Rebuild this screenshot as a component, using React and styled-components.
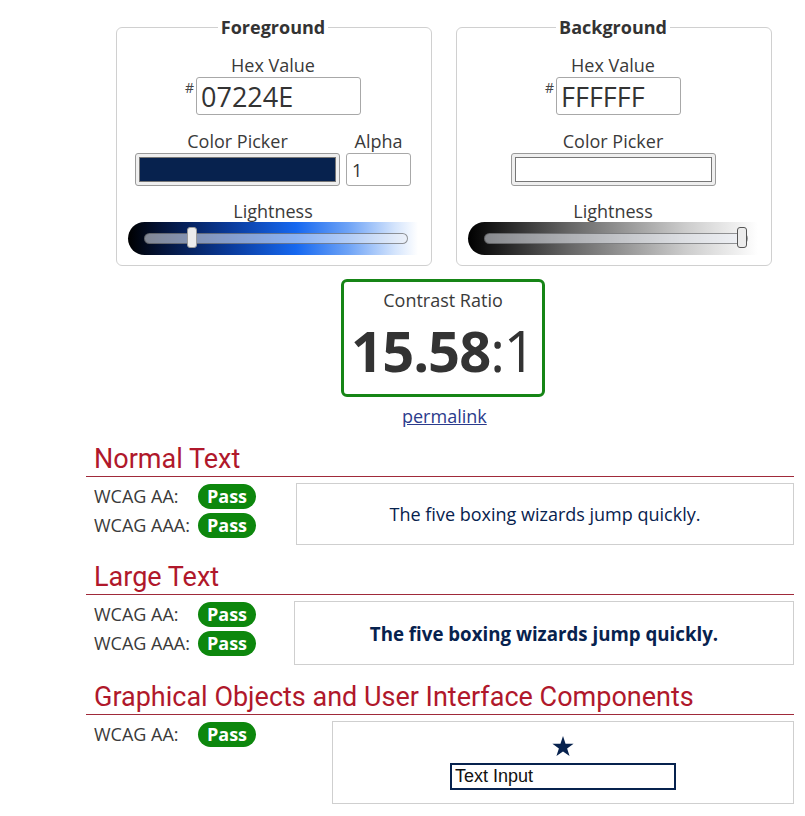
import React from 'react';
import styled, { createGlobalStyle } from 'styled-components';

const GlobalStyle = createGlobalStyle`
  body {
    margin: 0;
    background: #fff;
    font-family: "Open Sans", "Liberation Sans", sans-serif;
    color: #333;
  }
`;

const colors = [
  {
    title: 'Foreground',
    hex: '07224E',
    hexWidth: 165,
    swatch: '#07224E',
    alpha: '1',
    lightness: 16.7,
    gradient:
      'linear-gradient(to right, #000 0%, #04143a 12%, #0a3a9a 35%, #1668f0 58%, #6ea3f6 76%, #d4e4fc 92%, rgba(255,255,255,0) 100%)',
    thumbBorder: '#9a9a9a',
  },
  {
    title: 'Background',
    hex: 'FFFFFF',
    hexWidth: 125,
    swatch: '#FFFFFF',
    lightness: 100,
    gradient:
      'linear-gradient(to right, #000 0%, #222 12%, #666 35%, #999 55%, #ccc 75%, #eee 92%, rgba(255,255,255,0) 100%)',
    thumbBorder: '#555',
  },
];

const results = [
  {
    title: 'Normal Text',
    checks: ['WCAG AA:', 'WCAG AAA:'],
    indent: 40,
    height: 62,
    sample: 'normal',
  },
  {
    title: 'Large Text',
    checks: ['WCAG AA:', 'WCAG AAA:'],
    indent: 38,
    height: 64,
    sample: 'large',
  },
  {
    title: 'Graphical Objects and User Interface Components',
    checks: ['WCAG AA:'],
    indent: 76,
    height: 83,
    sample: 'ui',
  },
];

function ColorPanel({ c }) {
  return (
    <ColorSet>
      <Legend>{c.title}</Legend>
      <FieldLabel>Hex Value</FieldLabel>
      <HexRow>
        <Hash>#</Hash>
        <HexInput $w={c.hexWidth} value={c.hex} readOnly />
      </HexRow>
      <PickerRow>
        <Column>
          <FieldLabel>Color Picker</FieldLabel>
          <Swatch>
            <SwatchFill $color={c.swatch} />
          </Swatch>
        </Column>
        {c.alpha && (
          <Column>
            <FieldLabel>Alpha</FieldLabel>
            <AlphaInput value={c.alpha} readOnly />
          </Column>
        )}
      </PickerRow>
      <FieldLabel $top={14}>Lightness</FieldLabel>
      <Slider $gradient={c.gradient}>
        <Track>
          <Thumb $border={c.thumbBorder} style={{ left: `calc((100% - 10px) * ${c.lightness / 100})` }} />
        </Track>
      </Slider>
    </ColorSet>
  );
}

function Sample({ kind }) {
  if (kind === 'ui') {
    return (
      <UiSample>
        <svg width="22" height="21" viewBox="0 0 24 23">
          <polygon
            points="12,0 14.8,8.4 23.6,8.4 16.5,13.6 19.2,22 12,16.9 4.8,22 7.5,13.6 0.4,8.4 9.2,8.4"
            fill="#07224E"
          />
        </svg>
        <UiInput value="Text Input" readOnly />
      </UiSample>
    );
  }
  return <SampleText $large={kind === 'large'}>The five boxing wizards jump quickly.</SampleText>;
}

export default function App() {
  return (
    <Page>
      <GlobalStyle />
      <Pickers>
        {colors.map((c) => (
          <ColorPanel key={c.title} c={c} />
        ))}
      </Pickers>
      <RatioBox>
        <RatioLabel>Contrast Ratio</RatioLabel>
        <RatioValue>
          <strong>15.58</strong>:1
        </RatioValue>
      </RatioBox>
      <Permalink href="#">permalink</Permalink>
      <Results>
        {results.map((r) => (
          <section key={r.title}>
            <SectionTitle>{r.title}</SectionTitle>
            <ResultRow>
              <Checks>
                {r.checks.map((label) => (
                  <Check key={label}>
                    <CheckLabel>{label}</CheckLabel>
                    <Badge>Pass</Badge>
                  </Check>
                ))}
              </Checks>
              <SampleBox $indent={r.indent} $h={r.height}>
                <Sample kind={r.sample} />
              </SampleBox>
            </ResultRow>
          </section>
        ))}
      </Results>
    </Page>
  );
}

const Page = styled.div`
  width: 805px;
  padding-top: 16px;
  padding-bottom: 10px;
`;

const Pickers = styled.div`
  display: flex;
  gap: 24px;
  padding-left: 116px;
`;

const ColorSet = styled.fieldset`
  box-sizing: border-box;
  width: 316px;
  margin: 0;
  padding: 0 13px 10px 11px;
  border: 1px solid #d0d0d0;
  border-radius: 6px;
  display: flex;
  flex-direction: column;
  align-items: center;
`;

const Legend = styled.legend`
  margin: 0 auto;
  padding: 0 3px;
  font-size: 18px;
  font-weight: 700;
  line-height: 23px;
  color: #333;
`;

const FieldLabel = styled.div`
  margin-top: ${(p) => (p.$top !== undefined ? p.$top : 15)}px;
  font-size: 18px;
  line-height: 22px;
  color: #3a3a3a;
  text-align: center;
`;

const HexRow = styled.div`
  display: flex;
  align-items: flex-start;
  margin-top: 1px;
`;

const Hash = styled.span`
  font-size: 14px;
  line-height: 14px;
  margin-top: 4px;
  margin-right: 2px;
  color: #444;
`;

const HexInput = styled.input`
  box-sizing: border-box;
  width: ${(p) => p.$w}px;
  height: 38px;
  margin: 0;
  padding: 0 4px;
  border: 1px solid #a8a8a8;
  border-radius: 3px;
  font-family: "Open Sans", sans-serif;
  font-size: 27px;
  color: #333;
  outline: none;
`;

const PickerRow = styled.div`
  display: flex;
  gap: 6px;
`;

const Column = styled.div`
  display: flex;
  flex-direction: column;
  align-items: center;

  & > ${FieldLabel} {
    margin-top: 15px;
    margin-bottom: 1px;
  }
`;

const Swatch = styled.div`
  box-sizing: border-box;
  width: 205px;
  height: 33px;
  padding: 3px;
  border: 1px solid #9a9a9a;
  border-radius: 3px;
  background: #efefef;
`;

const SwatchFill = styled.div`
  height: 100%;
  box-sizing: border-box;
  border: 1px solid #777;
  background: ${(p) => p.$color};
`;

const AlphaInput = styled.input`
  box-sizing: border-box;
  width: 65px;
  height: 33px;
  margin: 0;
  padding: 0 5px;
  border: 1px solid #a8a8a8;
  border-radius: 3px;
  font-family: "Open Sans", sans-serif;
  font-size: 18px;
  color: #333;
  outline: none;
`;

const Slider = styled.div`
  box-sizing: border-box;
  align-self: stretch;
  height: 33px;
  padding: 0 10px 0 16px;
  border-radius: 17px 0 0 17px;
  background: ${(p) => p.$gradient};
  display: flex;
  align-items: center;
`;

const Track = styled.div`
  position: relative;
  flex: 1;
  height: 11px;
  box-sizing: border-box;
  border: 1px solid rgba(70, 70, 70, 0.55);
  border-radius: 6px;
  background: rgba(235, 238, 245, 0.55);
`;

const Thumb = styled.div`
  position: absolute;
  top: -7px;
  width: 10px;
  height: 21px;
  box-sizing: border-box;
  border: 1.5px solid ${(p) => p.$border};
  border-radius: 3px;
  background: #ececec;
`;

const RatioBox = styled.div`
  box-sizing: border-box;
  width: 204px;
  height: 118px;
  margin: 13px 0 0 341px;
  border: 3px solid #168516;
  border-radius: 6px;
  text-align: center;
`;

const RatioLabel = styled.div`
  margin-top: 7px;
  font-size: 18px;
  line-height: 22px;
  color: #3a3a3a;
`;

const RatioValue = styled.div`
  margin-top: 4px;
  font-size: 56px;
  line-height: 70px;
  font-weight: 400;
  color: #333;
  letter-spacing: -1px;

  strong {
    font-weight: 700;
  }
`;

const Permalink = styled.a`
  display: block;
  width: max-content;
  margin: 8px 0 0 402px;
  font-size: 18px;
  line-height: 22px;
  color: #2b3b8c;
  text-decoration: underline;
`;

const Results = styled.div`
  width: 708px;
  margin: 2px 0 0 86px;
`;

const SectionTitle = styled.h2`
  margin: 16px 0 0;
  padding: 0 0 1px 8px;
  font-family: Roboto, "Liberation Sans", sans-serif;
  font-size: 27px;
  font-weight: 400;
  line-height: 32px;
  color: #b0182b;
  border-bottom: 1px solid #a02a3a;
`;

const ResultRow = styled.div`
  display: flex;
  align-items: flex-start;
  margin-top: 6px;
`;

const Checks = styled.div`
  display: flex;
  flex-direction: column;
  gap: 4px;
  padding: 1px 0 0 8px;
`;

const Check = styled.div`
  display: flex;
  align-items: center;
`;

const CheckLabel = styled.span`
  width: 104px;
  font-size: 18px;
  line-height: 25px;
  color: #3a3a3a;
`;

const Badge = styled.span`
  box-sizing: border-box;
  width: 58px;
  height: 25px;
  border-radius: 13px;
  background: #0d870d;
  color: #fff;
  font-size: 18px;
  font-weight: 700;
  line-height: 25px;
  text-align: center;
`;

const SampleBox = styled.div`
  box-sizing: border-box;
  flex: 1;
  height: ${(p) => p.$h}px;
  margin-left: ${(p) => p.$indent}px;
  border: 1px solid #cfcfcf;
  display: flex;
  align-items: center;
  justify-content: center;
`;

const SampleText = styled.p`
  margin: 0;
  font-size: ${(p) => (p.$large ? '18.7px' : '18px')};
  font-weight: ${(p) => (p.$large ? 700 : 400)};
  color: #07224e;
`;

const UiSample = styled.div`
  display: flex;
  flex-direction: column;
  align-items: center;
  gap: 6px;
  padding-top: 1px;
`;

const UiInput = styled.input`
  box-sizing: border-box;
  width: 226px;
  height: 27px;
  margin: 0;
  padding: 0 3px;
  border: 2px solid #07224e;
  font-family: "Liberation Sans", Arial, sans-serif;
  font-size: 18px;
  color: #111;
  outline: none;
`;
